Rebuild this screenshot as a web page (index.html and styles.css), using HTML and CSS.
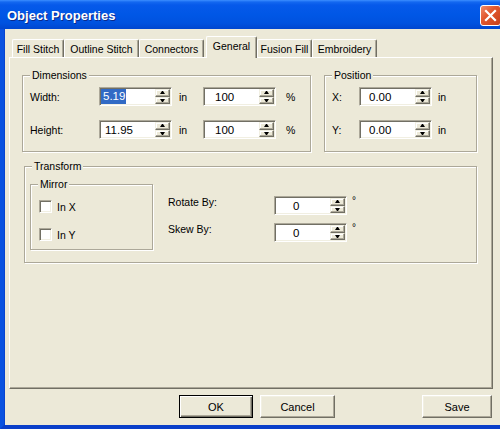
FILE: index.html
```html
<!DOCTYPE html>
<html>
<head>
<meta charset="utf-8">
<link rel="stylesheet" href="styles.css">
</head>
<body>
<div class="window">
  <div class="titlebar">
    <span class="title">Object Properties</span>
    <div class="close">
      <svg width="13" height="13" viewBox="0 0 13 13"><path d="M2 2 L11 11 M11 2 L2 11" stroke="#fff" stroke-width="2.2" stroke-linecap="square"/></svg>
    </div>
  </div>
  <div class="client">
    <div class="tabs">
      <div class="tab w52">Fill Stitch</div>
      <div class="tab w75">Outline Stitch</div>
      <div class="tab w65">Connectors</div>
      <div class="tab tab-active">General</div>
      <div class="tab w55">Fusion Fill</div>
      <div class="tab w65">Embroidery</div>
    </div>
    <div class="panel">
      <div class="toprow">
        <div class="group dims">
          <span class="glabel">Dimensions</span>
          <div class="row">
            <span class="lbl lbl-dim">Width:</span>
            <div class="spin"><span class="val pad1"><span class="sel">5.19</span></span><div class="arrows"><div class="arr"><i class="up"></i></div><div class="arr"><i class="down"></i></div></div></div>
            <span class="unit unit-in">in</span>
            <div class="spin"><span class="val pad12">100</span><div class="arrows"><div class="arr"><i class="up"></i></div><div class="arr"><i class="down"></i></div></div></div>
            <span class="unit unit-pct">%</span>
          </div>
          <div class="row row2">
            <span class="lbl lbl-dim">Height:</span>
            <div class="spin"><span class="val pad5">11.95</span><div class="arrows"><div class="arr"><i class="up"></i></div><div class="arr"><i class="down"></i></div></div></div>
            <span class="unit unit-in">in</span>
            <div class="spin"><span class="val pad12">100</span><div class="arrows"><div class="arr"><i class="up"></i></div><div class="arr"><i class="down"></i></div></div></div>
            <span class="unit unit-pct">%</span>
          </div>
        </div>
        <div class="group pos">
          <span class="glabel">Position</span>
          <div class="row">
            <span class="lbl lbl-pos">X:</span>
            <div class="spin"><span class="val pad10">0.00</span><div class="arrows"><div class="arr"><i class="up"></i></div><div class="arr"><i class="down"></i></div></div></div>
            <span class="unit unit-pos">in</span>
          </div>
          <div class="row row2">
            <span class="lbl lbl-pos">Y:</span>
            <div class="spin"><span class="val pad10">0.00</span><div class="arrows"><div class="arr"><i class="up"></i></div><div class="arr"><i class="down"></i></div></div></div>
            <span class="unit unit-pos">in</span>
          </div>
        </div>
      </div>
      <div class="group transform">
        <span class="glabel">Transform</span>
        <div class="group mirror">
          <span class="glabel">Mirror</span>
          <div class="check"><span class="box"></span><span>In X</span></div>
          <div class="check check2"><span class="box"></span><span>In Y</span></div>
        </div>
        <div class="tcol">
          <div class="trow">
            <span class="lbl lbl-t">Rotate By:</span>
            <div class="spin"><span class="val pad19">0</span><div class="arrows"><div class="arr"><i class="up"></i></div><div class="arr"><i class="down"></i></div></div></div>
            <span class="deg">°</span>
          </div>
          <div class="trow trow2">
            <span class="lbl lbl-t">Skew By:</span>
            <div class="spin"><span class="val pad19">0</span><div class="arrows"><div class="arr"><i class="up"></i></div><div class="arr"><i class="down"></i></div></div></div>
            <span class="deg">°</span>
          </div>
        </div>
      </div>
    </div>
    <div class="buttons">
      <div class="btn btn-default">OK</div>
      <div class="btn btn-cancel">Cancel</div>
      <div class="btn btn-save">Save</div>
    </div>
  </div>
</div>
</body>
</html>
```

FILE: styles.css
```css
html, body {
  margin: 0;
  padding: 0;
}
body {
  width: 500px;
  height: 429px;
  overflow: hidden;
  background: #ECE9D8;
  font-family: "Liberation Sans", Arial, sans-serif;
  font-size: 10.5px;
  color: #000;
}
.window {
  width: 500px;
  height: 429px;
  box-sizing: border-box;
  display: flex;
  flex-direction: column;
  border-left: 4px solid #0A52E0;
  border-bottom: 4px solid #0A3FC9;
  box-shadow: inset 1px 0 0 #0844D0;
  background: #ECE9D8;
}
.titlebar {
  height: 29px;
  flex: none;
  margin-left: -4px;
  padding-left: 7px;
  display: flex;
  align-items: center;
  justify-content: space-between;
  background: linear-gradient(#3C8EFF 0, #1468F0 2px, #0659EA 5px, #0057E6 50%, #0052DF 80%, #0046CF 100%);
}
.title {
  color: #fff;
  font-weight: bold;
  font-size: 13px;
  padding-top: 2px;
  text-shadow: 1px 1px 0 #0B2A8C;
}
.close {
  width: 21px;
  height: 21px;
  margin-right: -1px;
  margin-top: 1px;
  box-sizing: border-box;
  border: 1px solid #fff;
  border-radius: 3px;
  background: linear-gradient(135deg, #F08C6C 0, #E2582F 40%, #C8401A 100%);
  display: flex;
  align-items: center;
  justify-content: center;
}
.close svg { display: block; }
.client {
  flex: 1;
  display: flex;
  flex-direction: column;
  padding-top: 7px;
}
.tabs {
  display: flex;
  align-items: flex-end;
  height: 22px;
  margin-left: 8px;
  position: relative;
  z-index: 2;
}
.tab {
  height: 18px;
  margin-bottom: 1px;
  box-sizing: border-box;
  border-top: 1px solid #fff;
  border-left: 1px solid #fff;
  border-right: 1px solid #716F64;
  box-shadow: inset -1px 0 0 #ACA899;
  border-radius: 2px 2px 0 0;
  display: flex;
  align-items: center;
  justify-content: center;
  padding-top: 1px;
  background: #ECE9D8;
}
.w52 { width: 52px; }
.w75 { width: 75px; }
.w65 { width: 65px; }
.w55 { width: 55px; }
.tab-active {
  width: 51px;
  height: 22px;
  margin-bottom: 0;
  margin-left: 2px;
  align-items: flex-start;
  padding-top: 3px;
}
.panel {
  margin-top: -1px;
  margin-left: 5px;
  width: 484px;
  height: 332px;
  box-sizing: border-box;
  border: 1px solid;
  border-color: #fff #716F64 #716F64 #fff;
  box-shadow: inset -1px -1px 0 #ACA899;
  position: relative;
  z-index: 1;
}
.toprow {
  display: flex;
  margin-top: 17px;
  margin-left: 12px;
}
.group {
  position: relative;
  box-sizing: border-box;
  border: 1px solid #ACA899;
  box-shadow: 1px 1px 0 #fff, inset 1px 1px 0 #fff;
}
.glabel {
  position: absolute;
  top: -7px;
  left: 7px;
  padding: 0 2px;
  line-height: 13px;
  background: #ECE9D8;
}
.dims {
  width: 289px;
  height: 77px;
  padding: 11px 0 0 7px;
}
.pos {
  width: 153px;
  height: 77px;
  margin-left: 13px;
  padding: 11px 0 0 7px;
}
.pos .glabel { left: 7px; }
.row {
  display: flex;
  align-items: center;
  height: 19px;
}
.row2 { margin-top: 14px; }
.lbl { flex: none; }
.lbl-dim { width: 69px; }
.lbl-pos { width: 27px; }
.unit { flex: none; }
.unit-in { margin-left: 7px; width: 24px; }
.unit-pct { margin-left: 10px; }
.unit-pos { margin-left: 6px; }
.spin {
  flex: none;
  width: 73px;
  height: 19px;
  box-sizing: border-box;
  border: 1px solid;
  border-color: #ACA899 #fff #fff #ACA899;
  box-shadow: inset 1px 1px 0 #716F64, inset -1px -1px 0 #F1EFE2;
  background: #fff;
  padding: 1px;
  display: flex;
}
.val {
  flex: 1;
  display: flex;
  align-items: center;
  font-size: 11.5px;
}
.pad1 { padding-left: 0; }
.pad5 { padding-left: 4px; }
.pad10 { padding-left: 8px; }
.pad12 { padding-left: 10px; }
.pad19 { padding-left: 17px; }
.sel {
  background: #316AC5;
  color: #fff;
  padding: 1px 1px 1px 2px;
  line-height: 13px;
}
.arrows {
  width: 15px;
  display: flex;
  flex-direction: column;
  flex: none;
}
.arr {
  flex: 1;
  box-sizing: border-box;
  background: #ECE9D8;
  border: 1px solid;
  border-color: #F1EFE2 #716F64 #716F64 #F1EFE2;
  box-shadow: inset -1px -1px 0 #ACA899, inset 1px 1px 0 #fff;
  display: flex;
  align-items: center;
  justify-content: center;
}
.up, .down {
  display: block;
  width: 1px;
  height: 0;
  border-left: 2px solid transparent;
  border-right: 2px solid transparent;
}
.up { border-bottom: 3px solid #000; }
.down { border-top: 3px solid #000; }
.transform {
  width: 453px;
  height: 97px;
  margin-top: 14px;
  margin-left: 14px;
  display: flex;
  align-items: flex-start;
}
.transform .glabel { left: 7px; }
.mirror {
  width: 123px;
  height: 66px;
  margin-left: 5px;
  margin-top: 17px;
  padding: 15px 0 0 8px;
}
.mirror .glabel { left: 7px; }
.check {
  display: flex;
  align-items: center;
  height: 13px;
}
.check2 { margin-top: 15px; }
.box {
  width: 13px;
  height: 13px;
  box-sizing: border-box;
  flex: none;
  margin-right: 5px;
  background: #fff;
  border: 1px solid;
  border-color: #ACA899 #fff #fff #ACA899;
  box-shadow: inset 1px 1px 0 #716F64, inset -1px -1px 0 #F1EFE2;
}
.tcol {
  margin-left: 15px;
  margin-top: 29px;
}
.trow {
  display: flex;
  align-items: flex-start;
}
.trow2 { margin-top: 8px; }
.lbl-t { width: 106px; line-height: 13px; }
.deg {
  margin-left: 5px;
  line-height: 9px;
  font-size: 10px;
}
.buttons {
  display: flex;
  margin-top: 6px;
}
.btn {
  height: 23px;
  box-sizing: border-box;
  display: flex;
  align-items: center;
  justify-content: center;
  border: 1px solid;
  border-color: #fff #716F64 #716F64 #fff;
  box-shadow: inset -1px -1px 0 #ACA899, inset 1px 1px 0 #F1EFE2;
  font-size: 11px;
}
.btn-default {
  width: 74px;
  margin-left: 175px;
  border: 1px solid #000;
  box-shadow: inset 1px 1px 0 #fff, inset -1px -1px 0 #716F64, inset -2px -2px 0 #ACA899;
}
.btn-cancel { width: 75px; margin-left: 7px; }
.btn-save { width: 70px; margin-left: 87px; }
```
